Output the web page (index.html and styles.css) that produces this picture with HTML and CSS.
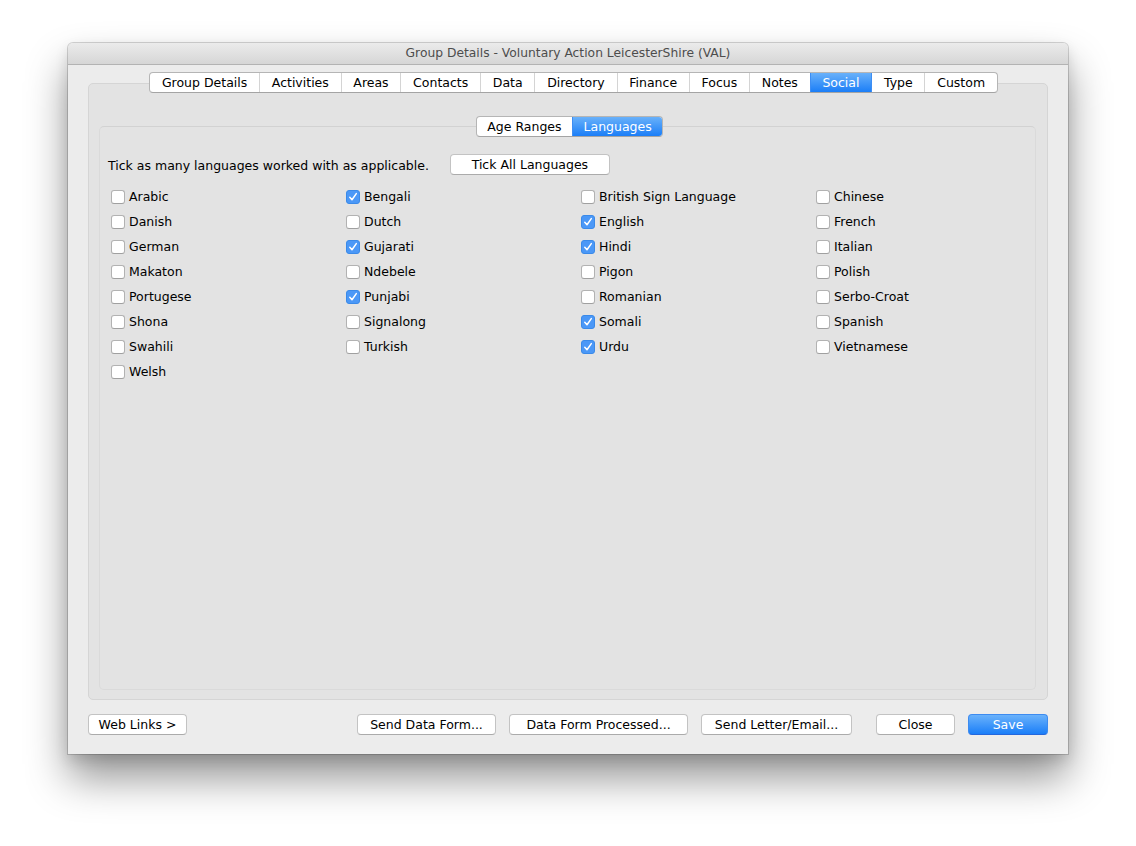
FILE: index.html
```html
<!DOCTYPE html>
<html lang="en">
<head>
<meta charset="utf-8">
<title>Group Details</title>
<link rel="stylesheet" href="styles.css">
</head>
<body>
<div class="window">
  <div class="titlebar">Group Details - Voluntary Action LeicesterShire (VAL)</div>
  <div class="content">
    <div class="tabview">
      <div class="tabs main">
        <span class="tab">Group Details</span>
        <span class="tab">Activities</span>
        <span class="tab">Areas</span>
        <span class="tab">Contacts</span>
        <span class="tab">Data</span>
        <span class="tab">Directory</span>
        <span class="tab">Finance</span>
        <span class="tab">Focus</span>
        <span class="tab">Notes</span>
        <span class="tab sel">Social</span>
        <span class="tab">Type</span>
        <span class="tab">Custom</span>
      </div>
      <div class="inner">
        <div class="tabs seg">
          <span class="tab">Age Ranges</span>
          <span class="tab sel">Languages</span>
        </div>
        <div class="intro">
          <span>Tick as many languages worked with as applicable.</span>
          <button class="btn w-tick">Tick All Languages</button>
        </div>
        <div class="grid">
          <label class="cb"><span class="box"></span>Arabic</label>
          <label class="cb"><span class="box on"></span>Bengali</label>
          <label class="cb"><span class="box"></span>British Sign Language</label>
          <label class="cb"><span class="box"></span>Chinese</label>
          <label class="cb"><span class="box"></span>Danish</label>
          <label class="cb"><span class="box"></span>Dutch</label>
          <label class="cb"><span class="box on"></span>English</label>
          <label class="cb"><span class="box"></span>French</label>
          <label class="cb"><span class="box"></span>German</label>
          <label class="cb"><span class="box on"></span>Gujarati</label>
          <label class="cb"><span class="box on"></span>Hindi</label>
          <label class="cb"><span class="box"></span>Italian</label>
          <label class="cb"><span class="box"></span>Makaton</label>
          <label class="cb"><span class="box"></span>Ndebele</label>
          <label class="cb"><span class="box"></span>Pigon</label>
          <label class="cb"><span class="box"></span>Polish</label>
          <label class="cb"><span class="box"></span>Portugese</label>
          <label class="cb"><span class="box on"></span>Punjabi</label>
          <label class="cb"><span class="box"></span>Romanian</label>
          <label class="cb"><span class="box"></span>Serbo-Croat</label>
          <label class="cb"><span class="box"></span>Shona</label>
          <label class="cb"><span class="box"></span>Signalong</label>
          <label class="cb"><span class="box on"></span>Somali</label>
          <label class="cb"><span class="box"></span>Spanish</label>
          <label class="cb"><span class="box"></span>Swahili</label>
          <label class="cb"><span class="box"></span>Turkish</label>
          <label class="cb"><span class="box on"></span>Urdu</label>
          <label class="cb"><span class="box"></span>Vietnamese</label>
          <label class="cb"><span class="box"></span>Welsh</label>
        </div>
      </div>
    </div>
    <div class="actions">
      <button class="btn w-web">Web Links &gt;</button>
      <span class="spacer"></span>
      <button class="btn w-send">Send Data Form...</button>
      <button class="btn w-proc">Data Form Processed...</button>
      <button class="btn w-letter">Send Letter/Email...</button>
      <button class="btn w-close gap-l">Close</button>
      <button class="btn primary w-save">Save</button>
    </div>
  </div>
</div>
</body>
</html>
```
FILE: styles.css
```css
* { box-sizing: border-box; }
html, body { margin: 0; padding: 0; background: #ffffff; }
html { min-height: 846px; }
body {
  font-family: "DejaVu Sans", "Open Sans", sans-serif;
  font-size: 12.5px;
  color: #000;
  padding: 43px 0 0 68px;
  min-height: 846px;
}
.window {
  width: 1000px;
  height: 711px;
  background: #ececec;
  border-radius: 5px 5px 0 0;
  box-shadow: 0 0 0 1px rgba(0,0,0,0.16), 0 24px 42px rgba(0,0,0,0.42), 0 6px 14px rgba(0,0,0,0.12);
  display: flex;
  flex-direction: column;
}
.titlebar {
  height: 22px;
  line-height: 21px;
  text-align: center;
  color: #4d4d4d;
  font-size: 12.3px;
  background: linear-gradient(#ebebeb, #d6d6d6);
  border-bottom: 1px solid #b3b3b3;
  border-radius: 5px 5px 0 0;
  flex: none;
}
.content {
  flex: 1;
  display: flex;
  flex-direction: column;
  padding: 18px 20px 19px 20px;
}
.tabview {
  flex: 1;
  background: #e3e3e3;
  border: 1px solid #d5d5d5;
  border-radius: 5px;
  display: flex;
  flex-direction: column;
  padding: 0 11px 9px 10px;
}
.tabs {
  align-self: center;
  display: flex;
  height: 21px;
  margin-top: -12px;
  background: #fff;
  border: 1px solid #b5b5b5;
  border-bottom-color: #a4a4a4;
  border-radius: 4px;
  overflow: hidden;
}
.tabs.main { margin-left: 12px; }
.tab {
  padding: 0 11.75px;
  line-height: 19px;
  border-left: 1px solid #d4d4d4;
  white-space: nowrap;
}
.tab:first-child { border-left: none; }
.tab.sel {
  color: #fff;
  background: linear-gradient(#69b1fa, #1b7ef7);
  border-left-color: #3d8ef4;
}
.tab.sel + .tab { border-left-color: #3d8ef4; }
.inner {
  flex: 1;
  margin-top: 33px;
  border: 1px solid #dadada;
  border-top-color: #d2d2d2;
  border-radius: 5px;
  padding: 0 0 0 8px;
  display: flex;
  flex-direction: column;
}
.seg { margin-top: -11px; margin-right: 4px; }
.seg .tab { padding: 0 10.5px; }
.intro {
  display: flex;
  align-items: center;
  gap: 21px;
  margin-top: 17px;
}
.intro span { padding-top: 1px; }
.btn {
  font: inherit;
  color: #000;
  height: 21px;
  padding: 0;
  background: #fff;
  border: 1px solid #c3c3c3;
  border-bottom-color: #ababab;
  border-radius: 4px;
  text-align: center;
  line-height: 19px;
}
.btn.primary {
  color: #fff;
  background: linear-gradient(#6ab2fb, #1a7ef8);
  border-color: #3d8bf0;
  border-bottom-color: #2467dc;
}
.grid {
  display: grid;
  grid-template-columns: repeat(4, 235px);
  grid-auto-rows: 25px;
  margin-top: 9px;
  padding-left: 3px;
}
.cb {
  display: flex;
  align-items: center;
  gap: 4px;
  white-space: nowrap;
}
.box {
  width: 14px;
  height: 14px;
  background: #fff;
  border: 1px solid #b2b2b2;
  border-bottom-color: #a0a0a0;
  border-radius: 3px;
  flex: none;
  display: inline-block;
}
.box.on {
  border-color: #3a8ae9;
  background: #4b98f7 url("data:image/svg+xml;utf8,<svg xmlns='http://www.w3.org/2000/svg' width='12' height='12' viewBox='0 0 12 12'><path d='M2.8 6.3 L5 8.8 L9.3 2.6' fill='none' stroke='white' stroke-width='1.5' stroke-linecap='round' stroke-linejoin='round'/></svg>") center/12px 12px no-repeat;
}
.actions {
  display: flex;
  align-items: center;
  gap: 13px;
  margin-top: 14px;
}
.spacer { flex: 1; }
.gap-l { margin-left: 11px; }
.w-tick { width: 160px; }
.w-web { width: 99px; }
.w-send { width: 139px; }
.w-proc { width: 179px; }
.w-letter { width: 151px; }
.w-close { width: 79px; }
.w-save { width: 80px; }
```
